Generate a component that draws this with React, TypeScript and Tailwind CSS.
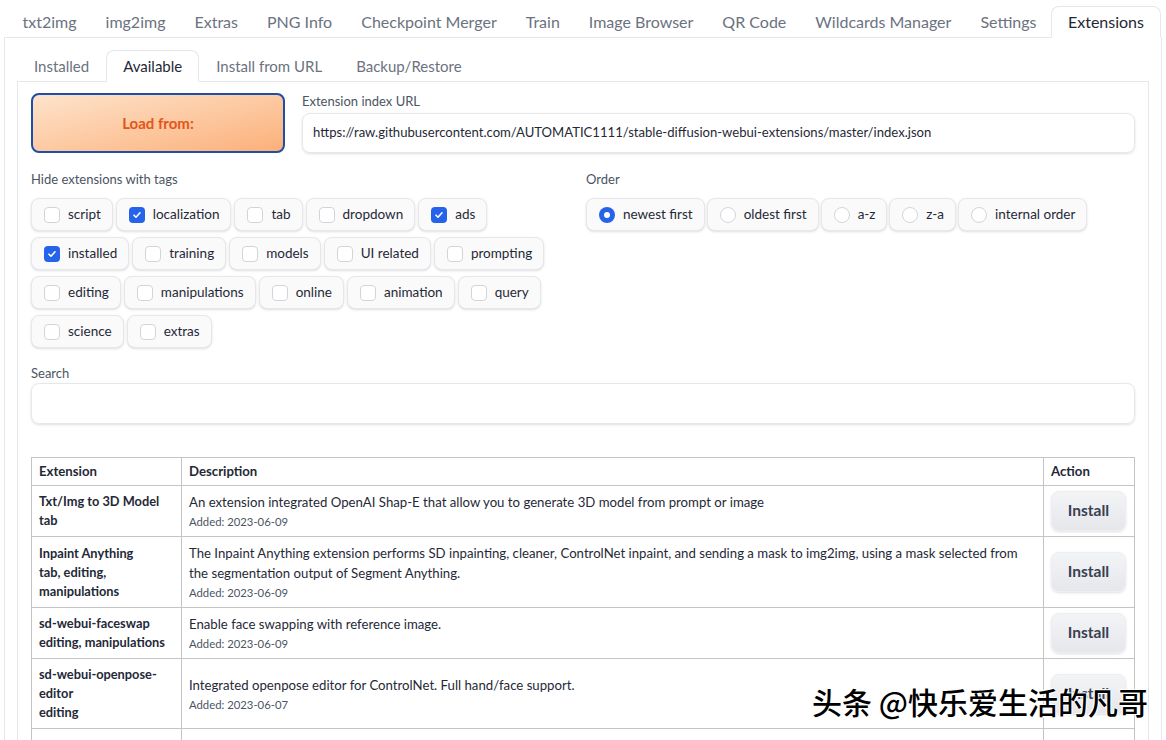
import React from 'react';

const topTabs = ['txt2img', 'img2img', 'Extras', 'PNG Info', 'Checkpoint Merger', 'Train', 'Image Browser', 'QR Code', 'Wildcards Manager', 'Settings', 'Extensions'];
const subTabs = ['Installed', 'Available', 'Install from URL', 'Backup/Restore'];

const tagRows = [
  [['script', false], ['localization', true], ['tab', false], ['dropdown', false], ['ads', true]],
  [['installed', true], ['training', false], ['models', false], ['UI related', false], ['prompting', false]],
  [['editing', false], ['manipulations', false], ['online', false], ['animation', false], ['query', false]],
  [['science', false], ['extras', false]],
] as [string, boolean][][];

const orders = ['newest first', 'oldest first', 'a-z', 'z-a', 'internal order'];

const rows = [
  {
    name: ['Txt/Img to 3D Model', 'tab'],
    desc: ['An extension integrated OpenAI Shap-E that allow you to generate 3D model from prompt or image'],
    added: '2023-06-09',
  },
  {
    name: ['Inpaint Anything', 'tab, editing,', 'manipulations'],
    desc: ['The Inpaint Anything extension performs SD inpainting, cleaner, ControlNet inpaint, and sending a mask to img2img, using a mask selected from', 'the segmentation output of Segment Anything.'],
    added: '2023-06-09',
  },
  {
    name: ['sd-webui-faceswap', 'editing, manipulations'],
    desc: ['Enable face swapping with reference image.'],
    added: '2023-06-09',
  },
  {
    name: ['sd-webui-openpose-', 'editor', 'editing'],
    desc: ['Integrated openpose editor for ControlNet. Full hand/face support.'],
    added: '2023-06-07',
  },
  {
    name: ['sd-webui-segment-', 'anything'],
    desc: [
      'Segment Anything for Stable Diffusion WebUI. Automatically generate high-quality segmentations/masks for images by clicking or text',
      'prompting. Aim for connecting WebUI and ControlNet with Segment Anything and GroundingDINO to enhance Stable Diffusion/ControlNet',
      'inpainting, enhance ControlNet semantic segmentation, automate image matting and create LoRA/LyCORIS training set.',
    ],
    added: '2023-06-05',
  },
];

function Check({ on }: { on: boolean }) {
  return on ? (
    <span className="w-4 h-4 rounded-[4px] bg-[#2563eb] flex items-center justify-center shrink-0">
      <svg width="10" height="10" viewBox="0 0 10 10" fill="none">
        <path d="M2 5.2l2 2 4-4.4" stroke="white" strokeWidth="1.6" strokeLinecap="round" strokeLinejoin="round" />
      </svg>
    </span>
  ) : (
    <span className="w-4 h-4 rounded-[4px] border border-[#d1d5db] bg-white shrink-0" />
  );
}

function Radio({ on }: { on: boolean }) {
  return on ? (
    <span className="w-4 h-4 rounded-full bg-[#2563eb] flex items-center justify-center shrink-0">
      <span className="w-[6px] h-[6px] rounded-full bg-white" />
    </span>
  ) : (
    <span className="w-4 h-4 rounded-full border border-[#d1d5db] bg-white shrink-0" />
  );
}

export default function App() {
  return (
    <div className="relative min-h-screen bg-white text-[#1f2937] px-1 pt-[6px]" style={{ fontFamily: 'Lato, "Noto Sans", sans-serif' }}>
      {/* Top tabs */}
      <div className="flex pl-1 relative z-10">
        {topTabs.map(t => (
          <div
            key={t}
            className={`h-8 shrink-0 whitespace-nowrap flex items-center text-[16px] border rounded-t-lg ${
              t === 'Extensions' ? 'border-[#e5e7eb] border-b-white bg-white text-[#1f2937] px-4' : 'border-transparent text-[#6b7280] px-[13.5px]'
            }`}
          >
            {t}
          </div>
        ))}
      </div>

      <div className="-mt-px border border-[#e5e7eb] rounded-b-lg px-3 pt-3 pb-6">
        {/* Sub tabs */}
        <div className="flex relative z-10">
          {subTabs.map(t => (
            <div
              key={t}
              className={`h-[32px] px-4 flex items-center text-[15px] border rounded-t-lg ${
                t === 'Available' ? 'border-[#e5e7eb] border-b-white bg-white text-[#1f2937]' : 'border-transparent text-[#6b7280]'
              }`}
            >
              {t}
            </div>
          ))}
        </div>

        <div className="-mt-px border border-[#e5e7eb] px-[13px] pt-[11px] pb-8">
          {/* Load row */}
          <div className="flex gap-[17px]">
            <button className="w-[254px] h-[60px] rounded-lg border-2 border-[#1d4ea8] bg-gradient-to-br from-[#fde3cb] to-[#fbb079] text-[#e1561a] font-bold text-[15px]">
              Load from:
            </button>
            <div className="flex-1 flex flex-col">
              <span className="text-[13px] text-[#4b5563] leading-4 mb-[4px]">Extension index URL</span>
              <div className="h-10 border border-[#e5e7eb] rounded-lg flex items-center px-[10px] text-[13.1px] text-[#1f2937] shadow-sm">
                https://raw.githubusercontent.com/AUTOMATIC1111/stable-diffusion-webui-extensions/master/index.json
              </div>
            </div>
          </div>

          {/* Tags + order */}
          <div className="flex gap-[16px] mt-[18px]">
            <div className="w-[539px]">
              <div className="text-[13px] text-[#4b5563] leading-4 mb-[11px]">Hide extensions with tags</div>
              <div className="flex flex-col gap-[6px]">
                {tagRows.map((row, i) => (
                  <div key={i} className="flex gap-[3px]">
                    {row.map(([label, on]) => (
                      <div key={label} className="h-[33px] pl-3 pr-[11px] flex items-center gap-2 border border-[#e5e7eb] rounded-lg bg-[#fafafa] shadow-sm text-[13.5px] text-[#1f2937]">
                        <Check on={on} />
                        <span>{label}</span>
                      </div>
                    ))}
                  </div>
                ))}
              </div>
            </div>
            <div className="flex-1">
              <div className="text-[13px] text-[#4b5563] leading-4 mb-[11px]">Order</div>
              <div className="flex gap-[2px]">
                {orders.map((o, i) => (
                  <div key={o} className="h-[33px] pl-3 pr-[11px] flex items-center gap-2 border border-[#e5e7eb] rounded-lg bg-[#fafafa] shadow-sm text-[13.5px] text-[#1f2937]">
                    <Radio on={i === 0} />
                    <span>{o}</span>
                  </div>
                ))}
              </div>
            </div>
          </div>

          {/* Search */}
          <div className="mt-[17px]">
            <div className="text-[13px] text-[#4b5563] leading-4 mb-[2px]">Search</div>
            <div className="h-[41px] border border-[#e5e7eb] rounded-lg shadow-sm" />
          </div>

          {/* Table */}
          <table className="w-full mt-[33px] border-collapse text-[13.2px] text-[#1f2937]">
            <thead>
              <tr className="h-[28px]">
                <th className="w-[150px] border border-[#c4c4c4] px-[7px] text-left font-bold">Extension</th>
                <th className="border border-[#c4c4c4] px-[7px] text-left font-bold">Description</th>
                <th className="w-[91px] border border-[#c4c4c4] px-[7px] text-left font-bold">Action</th>
              </tr>
            </thead>
            <tbody>
              {rows.map(r => (
                <tr key={r.name[0]}>
                  <td className="border border-[#c4c4c4] px-[7px] py-[6px] align-middle font-bold text-[12.8px] leading-[19px]">
                    {r.name.map(n => <div key={n} className="whitespace-nowrap">{n}</div>)}
                  </td>
                  <td className="border border-[#c4c4c4] px-[7px] py-[6px] align-middle leading-5">
                    {r.desc.map(d => <div key={d} className="whitespace-nowrap">{d}</div>)}
                    <div className="text-[11.3px] text-[#4b5563] leading-[17px] mt-px">Added: {r.added}</div>
                  </td>
                  <td className="border border-[#c4c4c4] px-[7px] py-[5px] align-middle">
                    <button className="w-[75px] h-10 rounded-lg bg-gradient-to-b from-[#f3f4f6] to-[#e5e7eb] shadow-sm border border-[#eceef1] font-bold text-[15.5px] text-[#374151]">
                      Install
                    </button>
                  </td>
                </tr>
              ))}
            </tbody>
          </table>
        </div>
      </div>

      {/* Watermark */}
      <div
        className="absolute left-[812px] top-[679px] text-[30px] font-medium text-black whitespace-nowrap pointer-events-none"
        style={{ fontFamily: '"Noto Sans CJK SC", sans-serif', textShadow: '0 0 2px #fff, 0 0 2px #fff, 1px 1px 0 #fff, -1px -1px 0 #fff' }}
      >
        头条 @快乐爱生活的凡哥
      </div>
    </div>
  );
}
